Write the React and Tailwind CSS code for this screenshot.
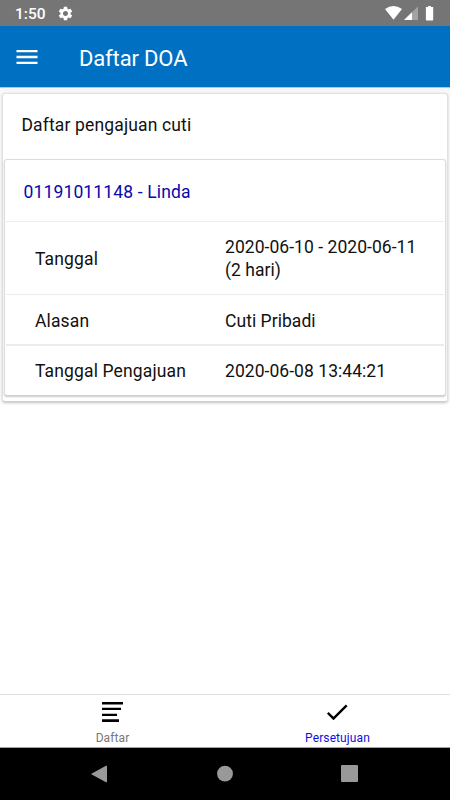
import { MdSettings, MdMenu, MdCheck } from "react-icons/md";

const StatusBar = () => {
  return (
    <div className="flex items-center h-[26px] pl-[15px] pr-4 bg-[#757575] text-white">
      <span className="text-[15.5px] leading-[26px] font-medium w-[41px] pt-[2px]">1:50</span>
      <MdSettings className="w-[17px] h-[17px] ml-px" />
      <svg className="ml-auto w-[49px] h-4" viewBox="0 0 49 16">
        <path d="M0 4Q8.500-2 17 4L8.500 14.700Z" fill="#fff" />
        <path d="M19 15L33 1.500V15Z" fill="#a3a3a3" />
        <path d="M19 15L27 7.300V15Z" fill="#fff" />
        <path d="M43 1h3v1h2.200v12.700q0 .8-.8.800h-5.700q-.8 0-.8-.8V2H43Z" fill="#fff" />
      </svg>
    </div>
  );
};

const AppBar = ({ title }) => {
  return (
    <header className="flex items-center h-[62px] pl-[13px] bg-[#0070c3] border-b border-[#a9c8e6] text-white">
      <MdMenu className="w-7 h-7" />
      <h1 className="ml-[38px] pt-[4px] text-[22px] leading-7 tracking-[-0.15px]">{title}</h1>
    </header>
  );
};

const Row = ({ label, value, className = "" }) => {
  return (
    <div className={`flex items-center ml-px mr-px border-[#ececec] ${className}`}>
      <div className="w-[190px] ml-[29px]">{label}</div>
      <div className="w-[212px] tracking-[0.05px]">{value}</div>
    </div>
  );
};

const LeaveCard = ({ leave }) => {
  return (
    <div className="ml-px mr-px h-[237px] bg-white rounded-[3px] border border-[#dcdcdc] border-b-[#cfcfcf] shadow-[0_1px_2px_rgba(0,0,0,0.2)]">
      <div className="flex items-center h-[61px] mx-px pl-[17.5px] pt-[3px] text-[#0808ae]">
        {leave.id} - {leave.name}
      </div>
      <Row
        label="Tanggal"
        value={
          <>
            {leave.dates}
            <br />({leave.days} hari)
          </>
        }
        className="h-[73px] border-t pt-[2px]"
      />
      <Row label="Alasan" value={leave.reason} className="h-[50px] border-t pt-[4px]" />
      <Row label="Tanggal Pengajuan" value={leave.submitted} className="h-[51px] border-t-2 pt-px" />
    </div>
  );
};

const Tab = ({ icon, label, className }) => {
  return (
    <div className="flex flex-col items-center flex-1">
      <div className="flex items-center shrink-0 h-[34px] text-black">{icon}</div>
      <span className={`text-[12px] leading-[19px] tracking-[0.1px] ${className}`}>{label}</span>
    </div>
  );
};

const ListIcon = () => (
  <svg className="w-[21px] h-5" viewBox="0 0 21 20">
    <path d="M0 0h21v2.600H0zM0 5.800h19v2.200H0zM0 11.700h15v2.300H0zM0 17.200h17v2.800H0z" />
  </svg>
);

const NavBar = () => {
  return (
    <div className="h-[53px] border-t border-[#a0a0a0] bg-black">
      <svg className="w-full h-[52px]" viewBox="0 0 450 52" fill="#999">
        <path d="M106 17.800q1-.5 1 .6v15.200q0 1.100-1 .6L91.800 26.600q-1-.6 0-1.200Z" />
        <circle cx="225" cy="25.700" r="7.900" />
        <rect x="341" y="17" width="17" height="17" rx="1" />
      </svg>
    </div>
  );
};

const leave = {
  id: "01191011148",
  name: "Linda",
  dates: "2020-06-10 - 2020-06-11",
  days: 2,
  reason: "Cuti Pribadi",
  submitted: "2020-06-08 13:44:21",
};

const App = () => {
  return (
    <div className="flex flex-col w-[450px] h-[800px] overflow-hidden bg-white font-['Roboto',sans-serif]">
      <StatusBar />
      <AppBar title="Daftar DOA" />
      <main className="flex-1 text-[17.5px] leading-[23px] tracking-[0.14px] text-[#111] bg-linear-to-b from-[#f4f4f4] from-0% via-white via-[10px] to-white">
        <section className="mt-[5px] mx-[2px] h-[309px] bg-white rounded-[3px] border border-[#e2e2e2] border-b-[#cfcfcf] shadow-[0_1px_3px_rgba(0,0,0,0.25)]">
          <div className="flex items-center h-[65px] pl-[18.5px] pb-[2px]">Daftar pengajuan cuti</div>
          <LeaveCard leave={leave} />
        </section>
      </main>
      <nav className="flex h-[53px] border-t border-[#e0e0e0] bg-white">
        <Tab icon={<ListIcon />} label="Daftar" className="text-[#777]" />
        <Tab icon={<MdCheck className="w-7 h-7 mr-px" />} label="Persetujuan" className="text-[#1010e0]" />
      </nav>
      <NavBar />
    </div>
  );
};

export default App;
